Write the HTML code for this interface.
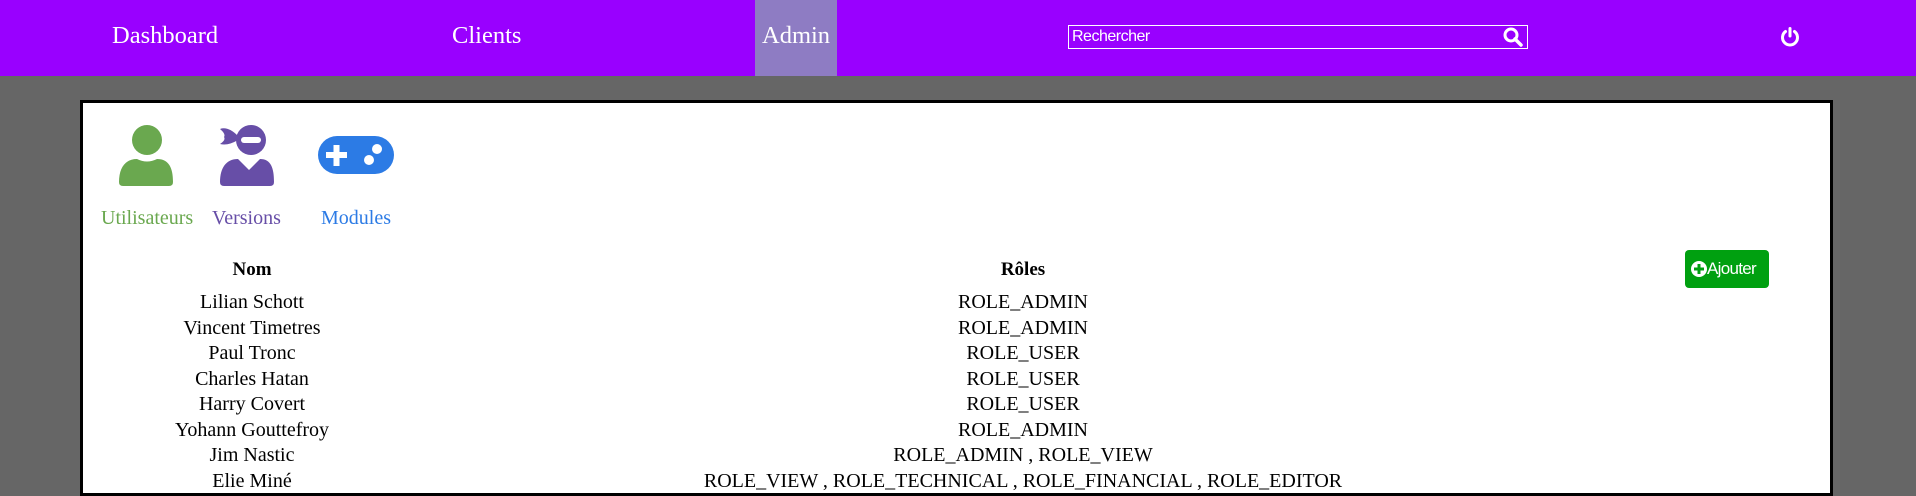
<!DOCTYPE html>
<html><head><meta charset="utf-8"><style>
*{margin:0;padding:0;box-sizing:border-box}
body{width:1916px;height:495px;overflow:hidden;background:#666;font-family:"Liberation Serif",serif;position:relative}
.nav{position:absolute;left:0;top:0;width:1916px;height:76px;background:#9900ff}
.nav .t{position:absolute;top:20px;color:#fff;font-size:24.5px;line-height:32px}
.adm{position:absolute;left:755px;top:0;width:82px;height:76px;background:#8e7cc3}
.search{position:absolute;left:1068px;top:25px;width:460px;height:24px;border:1px solid #fff;color:#fff;font-family:"Liberation Sans",sans-serif;font-size:16px;line-height:22px;padding-left:3px;letter-spacing:-0.5px}
.box{position:absolute;left:80px;top:100px;width:1753px;height:396px;background:#fff;border:3px solid #000}
.lbl{position:absolute;top:205px;font-size:20px;line-height:26px}
.c{position:absolute;font-size:20px;line-height:24px;text-align:center;color:#000;white-space:nowrap;transform:translateX(-50%)}
.btn{position:absolute;left:1685px;top:250px;width:84px;height:38px;background:#00a010;border-radius:4px;color:#fff;font-family:"Liberation Sans",sans-serif;font-size:17px;line-height:38px;padding-left:22px;letter-spacing:-0.7px}
</style></head><body>
<div class="nav">
<div class="adm"></div>
<div class="t" style="left:112px">Dashboard</div>
<div class="t" style="left:452px">Clients</div>
<div class="t" style="left:762px">Admin</div>
<div class="search">Rechercher
<svg style="position:absolute;right:4px;top:1px" width="20" height="20" viewBox="0 0 20 20"><circle cx="8" cy="8" r="6" fill="none" stroke="#fff" stroke-width="3"/><line x1="12" y1="12" x2="18" y2="18" stroke="#fff" stroke-width="3.5" stroke-linecap="round"/></svg></div>
<svg style="position:absolute;left:1779px;top:26px" width="22" height="22" viewBox="0 0 22 22"><path d="M6.5 5.5A7.5 7.5 0 1 0 15.5 5.5" fill="none" stroke="#fff" stroke-width="3" stroke-linecap="round"/><line x1="11" y1="2.5" x2="11" y2="10" stroke="#fff" stroke-width="3" stroke-linecap="round"/></svg>
</div>
<div class="box"></div>
<svg style="position:absolute;left:119px;top:124px" width="56" height="64" viewBox="0 0 56 64"><circle cx="28" cy="16" r="15" fill="#6aa84f"/><path d="M0 58C0 44 6 35 18 35Q28 40 38 35C50 35 54 44 54 58Q54 62 50 62H4Q0 62 0 58Z" fill="#6aa84f"/></svg>
<svg style="position:absolute;left:218px;top:124px" width="58" height="64" viewBox="0 0 58 64"><circle cx="33" cy="16" r="15" fill="#674ea7"/><path d="M20 12Q10 2 2 5Q8 10 6 13Q8 16 2 20Q10 22 20 16Z" fill="#674ea7"/><rect x="23" y="13" width="20" height="6" rx="3" fill="#fff"/><path d="M2 58C2 44 8 35 20 35L31 46L42 35C53 35 56 44 56 58Q56 62 52 62H6Q2 62 2 58Z" fill="#674ea7"/></svg>
<svg style="position:absolute;left:318px;top:136px" width="76" height="39" viewBox="0 0 76 39"><rect x="0" y="0" width="76" height="38" rx="19" fill="#2c7be5"/><rect x="8" y="16" width="21" height="6" fill="#fff"/><rect x="15.5" y="9" width="6" height="21" fill="#fff"/><circle cx="59" cy="13" r="5" fill="#fff"/><circle cx="51" cy="24" r="5" fill="#fff"/></svg>
<div class="lbl" style="left:101px;color:#6aa84f">Utilisateurs</div>
<div class="lbl" style="left:212px;color:#674ea7">Versions</div>
<div class="lbl" style="left:321px;color:#2c7be5">Modules</div>
<div class="c" style="left:252px;top:258px;font-weight:bold;font-size:19px">Nom</div>
<div class="c" style="left:1023px;top:258px;font-weight:bold;font-size:19px">Rôles</div>
<div class="btn"><svg style="position:absolute;left:6px;top:11px" width="16" height="16" viewBox="0 0 16 16"><circle cx="8" cy="8" r="8" fill="#fff"/><rect x="3" y="6.5" width="10" height="3" fill="#00a010"/><rect x="6.5" y="3" width="3" height="10" fill="#00a010"/></svg>Ajouter</div>
<div class="c" style="left:252px;top:290px">Lilian Schott</div><div class="c" style="left:1023px;top:290px">ROLE_ADMIN</div>
<div class="c" style="left:252px;top:315.5px">Vincent Timetres</div><div class="c" style="left:1023px;top:315.5px">ROLE_ADMIN</div>
<div class="c" style="left:252px;top:341px">Paul Tronc</div><div class="c" style="left:1023px;top:341px">ROLE_USER</div>
<div class="c" style="left:252px;top:366.5px">Charles Hatan</div><div class="c" style="left:1023px;top:366.5px">ROLE_USER</div>
<div class="c" style="left:252px;top:392px">Harry Covert</div><div class="c" style="left:1023px;top:392px">ROLE_USER</div>
<div class="c" style="left:252px;top:417.5px">Yohann Gouttefroy</div><div class="c" style="left:1023px;top:417.5px">ROLE_ADMIN</div>
<div class="c" style="left:252px;top:443px">Jim Nastic</div><div class="c" style="left:1023px;top:443px">ROLE_ADMIN , ROLE_VIEW</div>
<div class="c" style="left:252px;top:468.5px">Elie Miné</div><div class="c" style="left:1023px;top:468.5px">ROLE_VIEW , ROLE_TECHNICAL , ROLE_FINANCIAL , ROLE_EDITOR</div>
</body></html>
